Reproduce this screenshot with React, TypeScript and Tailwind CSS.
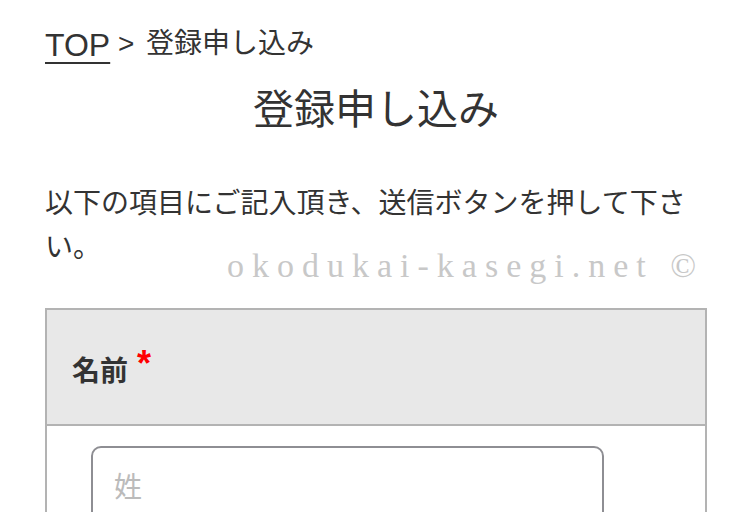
export default function App() {
  return (
    <div className="relative min-h-screen overflow-hidden bg-white px-[45px] font-['Liberation_Sans','Noto_Sans_CJK_JP',sans-serif] text-[#333]">
      <nav className="pt-[23px] text-[28px] leading-[42px]">
        <a
          href="#"
          className="align-[-3px] text-[32px] underline decoration-2 underline-offset-[6px]"
        >
          TOP
        </a>{" "}
        &gt;<span className="ml-[4px]"> 登録申し込み</span>
      </nav>

      <h1 className="mt-[14px] text-center text-[41px] leading-[60px]">登録申し込み</h1>

      <p className="mt-[42px] text-[28px] leading-[44px]">
        以下の項目にご記入頂き、送信ボタンを押して下さい。
      </p>

      <div className="mt-[38px] border-2 border-[#b3b3b3]">
        <div className="flex h-[116px] items-center border-b-2 border-[#b3b3b3] bg-[#e8e8e8] pb-[4px] pl-[25px]">
          <span className="text-[28px] font-bold">
            名前
            <span className="ml-[9px] align-[5px] text-[36px] font-bold text-[#ff0000]">*</span>
          </span>
        </div>
        <div className="px-[44px] pt-[20px] pb-[20px]">
          <input
            type="text"
            placeholder="姓"
            className="h-[84px] w-[513px] rounded-[10px] border-2 border-[#8e8e93] bg-white px-[21px] text-[28px] outline-none placeholder:text-[#bbbbbb]"
          />
        </div>
      </div>

      <div className="pointer-events-none absolute left-[227px] top-[249px] select-none font-['Liberation_Serif',serif] text-[34px] leading-[34px] tracking-[8px] text-[#c8c8c8]">
        okodukai-kasegi.net ©
      </div>
    </div>
  );
}
